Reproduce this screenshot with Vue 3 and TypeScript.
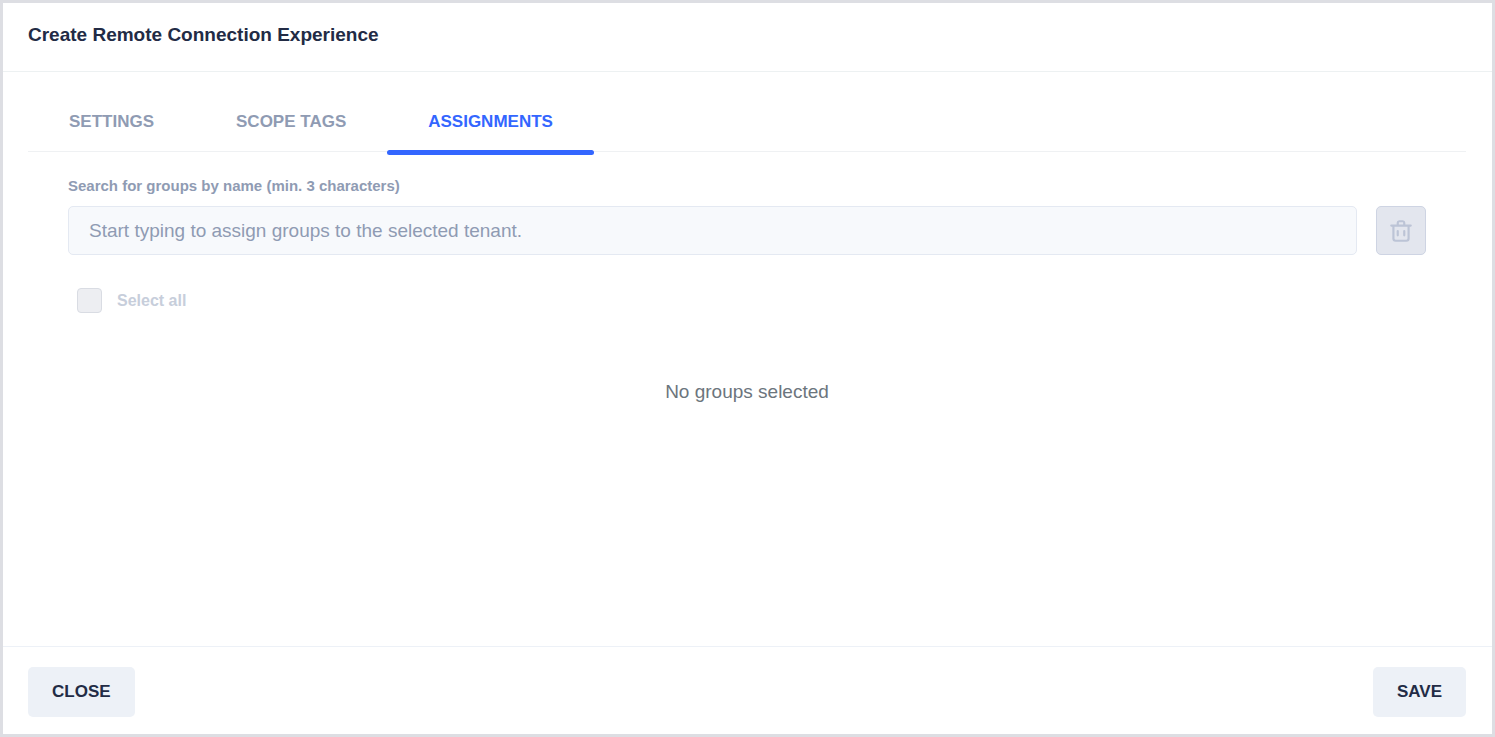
<script setup lang="ts">
import { ref } from 'vue'

const tabs: string[] = ['Settings', 'Scope tags', 'Assignments']
const activeTab = ref('Assignments')
const query = ref('')
const groups = ref<string[]>([])
</script>

<template>
  <form class="dialog" @submit.prevent>
    <header class="header">
      <h1 class="title">Create Remote Connection Experience</h1>
    </header>

    <main class="content">
      <div class="tabs" role="tablist">
        <button
          v-for="tab in tabs"
          :key="tab"
          type="button"
          role="tab"
          class="tab"
          :class="{ active: tab === activeTab }"
          :aria-selected="tab === activeTab"
          @click="activeTab = tab"
        >
          {{ tab }}
        </button>
      </div>

      <section class="panel">
        <label class="search-label" for="group-search">Search for groups by name (min. 3 characters)</label>
        <div class="search-row">
          <input
            id="group-search"
            v-model="query"
            class="search"
            type="text"
            placeholder="Start typing to assign groups to the selected tenant."
          />
          <button type="button" class="delete" aria-label="Remove groups" :disabled="!groups.length">
            <svg viewBox="0 0 24 24" width="26" height="26" fill="currentColor" aria-hidden="true">
              <path d="M21 6h-5V4.33A2.42 2.42 0 0 0 13.5 2h-3A2.42 2.42 0 0 0 8 4.33V6H3a1 1 0 0 0 0 2h1v11a3 3 0 0 0 3 3h10a3 3 0 0 0 3-3V8h1a1 1 0 0 0 0-2zM10 4.33c0-.16.21-.33.5-.33h3c.29 0 .5.17.5.33V6h-4zM18 19a1 1 0 0 1-1 1H7a1 1 0 0 1-1-1V8h12z" />
              <path d="M9 17a1 1 0 0 0 1-1v-4a1 1 0 0 0-2 0v4a1 1 0 0 0 1 1z" />
              <path d="M15 17a1 1 0 0 0 1-1v-4a1 1 0 0 0-2 0v4a1 1 0 0 0 1 1z" />
            </svg>
          </button>
        </div>
        <label class="select-all">
          <input type="checkbox" class="checkbox" :disabled="!groups.length" />
          <span>Select all</span>
        </label>
        <p class="empty">No groups selected</p>
      </section>
    </main>

    <footer class="footer">
      <button type="button" class="action">Close</button>
      <button type="submit" class="action">Save</button>
    </footer>
  </form>
</template>

<style>
body {
  margin: 0;
  background: #fff;
}
</style>

<style scoped>
.dialog,
.dialog * {
  box-sizing: border-box;
}

.dialog {
  display: flex;
  flex-direction: column;
  min-height: 100vh;
  border: 3px solid #dddee3;
  background: #fff;
  color: #222b45;
  font-family: "Liberation Sans", Arial, sans-serif;
}

button,
input {
  margin: 0;
  font-family: inherit;
}

.header {
  padding: 20px 26px 24px 25px;
  border-bottom: 1px solid #edf1f2;
}

.title {
  margin: 0;
  font-size: 19px;
  font-weight: 700;
  line-height: 24px;
}

.content {
  flex: 1;
  padding: 20px 26px 20px 25px;
}

.tabs {
  display: flex;
  border-bottom: 1px solid #eff1f3;
}

.tab {
  position: relative;
  padding: 18px 41px 17px;
  border: 0;
  background: none;
  color: #8f9bb3;
  font-size: 17px;
  font-weight: 700;
  line-height: 24px;
  text-transform: uppercase;
}

.tab.active {
  color: #3366ff;
}

.tab.active::after {
  content: "";
  position: absolute;
  right: 0;
  bottom: -4px;
  left: 0;
  height: 5px;
  border-radius: 3px;
  background: #3366ff;
}

.panel {
  padding: 24px 40px 0;
}

.search-label {
  display: block;
  margin-bottom: 10px;
  color: #8f9bb3;
  font-size: 15px;
  font-weight: 700;
  line-height: 20px;
}

.search-row {
  display: flex;
  gap: 19px;
}

.search {
  flex: 1;
  min-width: 0;
  height: 49px;
  padding: 0 20px;
  border: 1px solid #e4e9f2;
  border-radius: 5px;
  background: #f7f9fc;
  color: #222b45;
  font-size: 19px;
}

.search::placeholder {
  color: #8f9bb3;
  opacity: 1;
}

.delete {
  display: flex;
  align-items: center;
  justify-content: center;
  width: 50px;
  height: 49px;
  padding: 0;
  border: 1px solid #ced4e3;
  border-radius: 5px;
  background: #e3e6ee;
  color: #bcc4d6;
}

.select-all {
  display: flex;
  align-items: center;
  gap: 15px;
  width: fit-content;
  margin: 33px 0 0 9px;
  color: #c7cedb;
  font-size: 16px;
  font-weight: 700;
  line-height: 24px;
}

.checkbox {
  appearance: none;
  width: 25px;
  height: 25px;
  margin: 0;
  border: 1px solid #d9dce3;
  border-radius: 4px;
  background: #edeef2;
}

.checkbox:checked {
  background: #3366ff;
}

.empty {
  margin: 67px 0 0;
  color: #6c757d;
  font-size: 19px;
  line-height: 24px;
  text-align: center;
}

.footer {
  display: flex;
  justify-content: space-between;
  padding: 20px 26px 17px 25px;
  border-top: 1px solid #edf1f7;
}

.action {
  height: 50px;
  padding: 0 24px;
  border: 0;
  border-radius: 5px;
  background: #edf1f7;
  color: #222b45;
  font-size: 17px;
  font-weight: 700;
  text-transform: uppercase;
}
</style>
